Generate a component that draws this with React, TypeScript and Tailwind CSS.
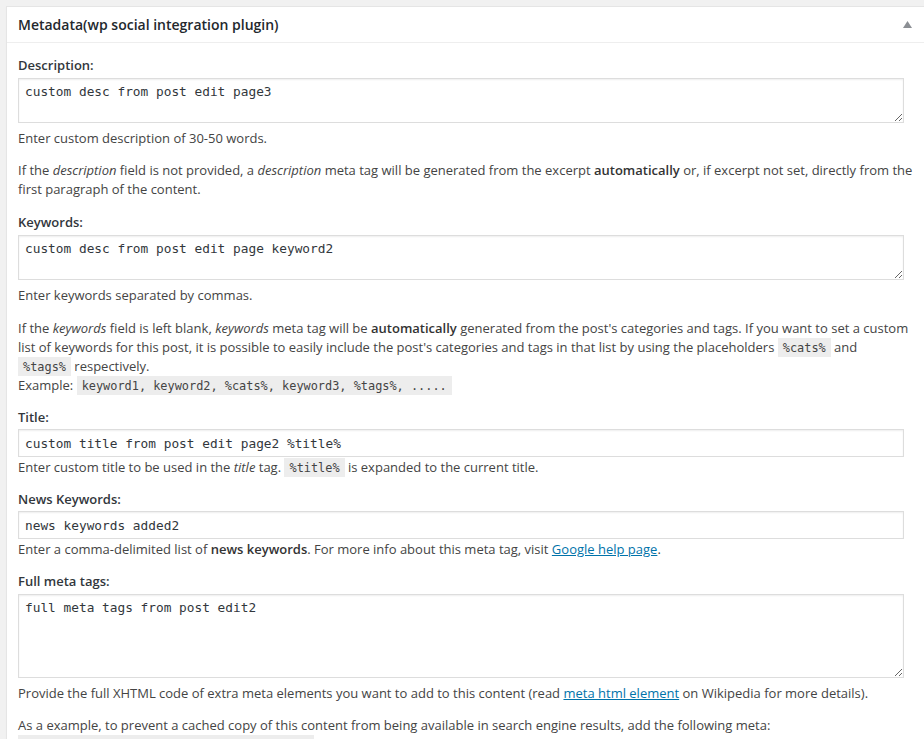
import React from "react";

const mono = { fontFamily: '"DejaVu Sans Mono", "Liberation Mono", monospace' };

function Code({ children }: { children: React.ReactNode }) {
  return (
    <code
      className="bg-[rgba(0,0,0,0.07)] px-[5px] pt-[3px] pb-[2px] text-[11.9px] leading-none text-[#444]"
      style={mono}
    >
      {children}
    </code>
  );
}

function Label({ children, className = "" }: { children: React.ReactNode; className?: string }) {
  return (
    <div className={`leading-[19px] font-semibold text-[#32373c] ${className}`}>{children}</div>
  );
}

function Line({ children, className = "" }: { children: React.ReactNode; className?: string }) {
  return <div className={`whitespace-nowrap leading-[19px] ${className}`}>{children}</div>;
}

const areaCls =
  "block w-[886px] border border-[#ddd] shadow-[inset_0_1px_2px_rgba(0,0,0,0.07)] bg-white px-[6px] py-[3px] text-[12.8px] leading-[19px] text-[#32373c] outline-none";

export default function App() {
  return (
    <div
      className="min-h-screen w-full overflow-hidden bg-[#f1f1f1] pl-[6px] pt-[6px] text-[13px] text-[#444]"
      style={{ fontFamily: '"Open Sans", "Noto Sans", sans-serif' }}
    >
      <div className="w-[960px] border border-[#e5e5e5] bg-white shadow-[0_1px_1px_rgba(0,0,0,0.04)]">
        <div className="flex h-[36px] items-center border-b border-[#eee] pl-[11px]">
          <h2 className="text-[14px] font-semibold text-[#23282d]">Metadata(wp social integration plugin)</h2>
          <svg className="ml-[624px]" width="9" height="7" viewBox="0 0 9 7">
            <polygon points="4.5,0 9,7 0,7" fill="#8c8f94" />
          </svg>
        </div>

        <div className="w-[904px] pl-[11px] pt-[13px] pb-[20px]">
          <Label>Description:</Label>
          <textarea
            readOnly
            className={`${areaCls} mt-[3px] h-[45px]`}
            style={mono}
            defaultValue="custom desc from post edit page3"
          />
          <Line className="mt-[6px]">Enter custom description of 30-50 words.</Line>
          <div className="mt-[13px]">
            <Line>
              If the <em>description</em> field is not provided, a <em>description</em> meta tag will be generated from the
              excerpt <strong className="font-semibold text-[#333]">automatically</strong> or, if excerpt not set, directly from the
            </Line>
            <Line>first paragraph of the content.</Line>
          </div>

          <Label className="mt-[14px]">Keywords:</Label>
          <textarea
            readOnly
            className={`${areaCls} mt-[3px] h-[45px]`}
            style={mono}
            defaultValue="custom desc from post edit page keyword2"
          />
          <Line className="mt-[6px]">Enter keywords separated by commas.</Line>
          <div className="mt-[14px]">
            <Line>
              If the <em>keywords</em> field is left blank, <em>keywords</em> meta tag will be{" "}
              <strong className="font-semibold text-[#333]">automatically</strong> generated from the post's categories and
              tags. If you want to set a custom
            </Line>
            <Line>
              list of keywords for this post, it is possible to easily include the post's categories and tags in that list by
              using the placeholders <Code>%cats%</Code> and
            </Line>
            <Line>
              <Code>%tags%</Code> respectively.
            </Line>
            <Line>
              Example: <Code>keyword1, keyword2, %cats%, keyword3, %tags%, .....</Code>
            </Line>
          </div>

          <Label className="mt-[13px]">Title:</Label>
          <input
            readOnly
            className={`${areaCls} mt-[2px] h-[28px] py-0`}
            style={mono}
            defaultValue="custom title from post edit page2 %title%"
          />
          <Line className="mt-[1px]">
            Enter custom title to be used in the <em>title</em> tag. <Code>%title%</Code> is expanded to the current title.
          </Line>

          <Label className="mt-[13px]">News Keywords:</Label>
          <input
            readOnly
            className={`${areaCls} mt-[2px] h-[28px] py-0`}
            style={mono}
            defaultValue="news keywords added2"
          />
          <Line className="mt-[1px]">
            Enter a comma-delimited list of <strong className="font-semibold text-[#333]">news keywords</strong>. For more info
            about this meta tag, visit{" "}
            <a href="#" className="text-[#0073aa] underline">
              Google help page
            </a>
            .
          </Line>

          <Label className="mt-[13px]">Full meta tags:</Label>
          <textarea
            readOnly
            className={`${areaCls} mt-[3px] h-[84px]`}
            style={mono}
            defaultValue="full meta tags from post edit2"
          />
          <Line className="mt-[6px]">
            Provide the full XHTML code of extra meta elements you want to add to this content (read{" "}
            <a href="#" className="text-[#0073aa] underline">
              meta html element
            </a>{" "}
            on Wikipedia for more details).
          </Line>
          <Line className="mt-[13px]">
            As a example, to prevent a cached copy of this content from being available in search engine results, add the
            following meta:
          </Line>
          <Line>
            <Code>{'<meta name="robots" content="noarchive">'}</Code>
          </Line>
        </div>
      </div>
    </div>
  );
}
